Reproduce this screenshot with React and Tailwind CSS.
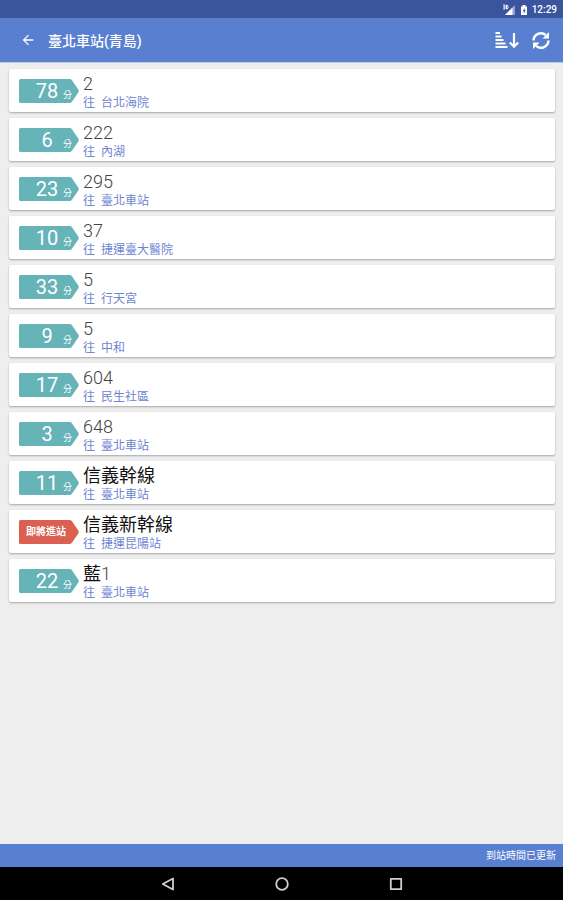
import { MdArrowBack } from 'react-icons/md'

const arrivals = [
  { id: 1, minutes: 78, number: '2', dest: '台北海院' },
  { id: 2, minutes: 6, number: '222', dest: '內湖' },
  { id: 3, minutes: 23, number: '295', dest: '臺北車站' },
  { id: 4, minutes: 10, number: '37', dest: '捷運臺大醫院' },
  { id: 5, minutes: 33, number: '5', dest: '行天宮' },
  { id: 6, minutes: 9, number: '5', dest: '中和' },
  { id: 7, minutes: 17, number: '604', dest: '民生社區' },
  { id: 8, minutes: 3, number: '648', dest: '臺北車站' },
  { id: 9, minutes: 11, name: '信義幹線', dest: '臺北車站' },
  { id: 10, minutes: null, name: '信義新幹線', dest: '捷運昆陽站' },
  { id: 11, minutes: 22, name: '藍', number: '1', dest: '臺北車站' },
]

function StatusBar() {
  return (
    <div className="h-[18px] bg-[#3b549e] flex items-center justify-end pt-px pr-[6px] text-white">
      <svg className="w-[14px] h-3 mr-1" viewBox="0 0 14 12" fill="currentColor">
        <path d="M13 1v10H3z" opacity="0.45" />
        <path d="M10.500 3.500V11H3z" />
        <path d="M1 1h2v4H1M1 3h2M4.500 1v4h0.500l1-1V2L5 1z" fill="none" stroke="currentColor" strokeWidth="0.900" />
      </svg>
      <svg className="w-2 h-3 mr-1" viewBox="0 0 8 12">
        <path d="M2.500 1h3v1.500h1.500V11H1V2.500h1.500z" fill="currentColor" />
        <path d="M4.600 4L2.700 7.200h1.200V9.500l1.900-3.200H4.600z" fill="#3b549e" />
      </svg>
      <span className="text-[10px] leading-none font-medium">12:29</span>
    </div>
  )
}

// 到站時間標籤
function TimeTag({ minutes }) {
  const arriving = minutes === null
  return (
    <div className="relative w-[60px] h-6 shrink-0 text-white">
      <svg className={`absolute inset-0 w-full h-full ${arriving ? 'text-[#dc6052]' : 'text-[#66b3b8]'}`} viewBox="0 0 60 24" fill="currentColor">
        <path d="M1.500 0H50.500q1.500 0 2.400 1.200L59.300 10.600q0.900 1.400 0 2.800L52.900 22.800Q52 24 50.500 24H1.500Q0 24 0 22.500V1.500Q0 0 1.500 0z" />
      </svg>
      {arriving ? (
        <div className="relative h-6 pl-[7px] flex items-center text-[10px] leading-none font-bold">即將進站</div>
      ) : (
        <div className="relative h-6 pt-px pl-3 flex items-center">
          <span className="w-8 text-center text-[20px] leading-6">{minutes}</span>
          <span className="pt-2 text-[9px] leading-none">分</span>
        </div>
      )}
    </div>
  )
}

export default function App() {
  return (
    <div className="min-h-screen flex flex-col bg-[#eeeeee] font-[Roboto,'Noto_Sans_CJK_TC',sans-serif]">
      <StatusBar />
      <header className="h-[45px] bg-[#597fd0] border-b border-[#b9c9ea] flex items-center pl-5 pr-3 text-white">
        <button type="button" aria-label="返回" className="mr-3">
          <MdArrowBack className="w-4 h-4" />
        </button>
        <h1 className="flex-1 pt-[2px] text-[14px] leading-5 font-medium">臺北車站(青島)</h1>
        <button type="button" aria-label="排序" className="mr-3">
          <svg className="w-6 h-5" viewBox="0 0 24 20" fill="none" stroke="currentColor">
            <path d="M0.500 3h4.500M0.500 6.500h6M0.500 10h8M0.500 13.500h10M0.500 17h12" strokeWidth="2.200" />
            <path d="M19 3v13M14.800 12.500l4.200 4.300 4.200-4.300" strokeWidth="2.200" />
          </svg>
        </button>
        <button type="button" aria-label="重新整理">
          <svg className="w-5 h-5" viewBox="0 0 20 20">
            <path d="M2.500 10.500A7.500 7.500 0 0 1 14.800 5M17.500 10.500A7.500 7.500 0 0 1 5.200 16" fill="none" stroke="currentColor" strokeWidth="2.400" />
            <path d="M18 2v6.500h-6.500zM2 19V12.500h6.500z" fill="currentColor" />
          </svg>
        </button>
      </header>

      <main className="flex-1 pl-[9px] pr-2 pt-[6px]">
        <ul className="space-y-[6px]">
          {arrivals.map(a => (
            <li key={a.id} className="h-[43px] bg-white rounded-[2px] shadow-[0_1px_2px_rgba(0,0,0,0.3)] flex items-center pl-[10px]">
              <TimeTag minutes={a.minutes} />
              <div className="pt-1 pl-1">
                <p className="text-[18px] leading-5">
                  {a.name && <span className="text-[#111111]">{a.name}</span>}
                  {a.number && <span className="font-light text-[#444444]">{a.number}</span>}
                </p>
                <p className="flex gap-[6px] text-[12px] leading-[18px] text-[#6f84d2]">
                  <span>往</span>
                  <span>{a.dest}</span>
                </p>
              </div>
            </li>
          ))}
        </ul>
      </main>

      <footer>
        <p className="h-[23px] bg-[#597fd0] pr-[7px] text-right text-[10px] leading-6 text-white">到站時間已更新</p>
        <nav className="h-[33px] bg-black flex items-center justify-center gap-[98px] text-[#cfcfcf]">
          <button type="button" aria-label="Back">
            <svg className="w-4 h-4" viewBox="0 0 16 16" fill="none" stroke="currentColor" strokeWidth="1.800" strokeLinejoin="round">
              <path d="M13 2.500v11L2.800 8z" />
            </svg>
          </button>
          <button type="button" aria-label="Home">
            <svg className="w-4 h-4" viewBox="0 0 16 16" fill="none" stroke="currentColor" strokeWidth="1.800">
              <circle cx="8" cy="8" r="5.800" />
            </svg>
          </button>
          <button type="button" aria-label="Recents">
            <svg className="w-4 h-4" viewBox="0 0 16 16" fill="none" stroke="currentColor" strokeWidth="1.800" strokeLinejoin="round">
              <rect x="2.800" y="2.800" width="10.400" height="10.400" />
            </svg>
          </button>
        </nav>
      </footer>
    </div>
  )
}
